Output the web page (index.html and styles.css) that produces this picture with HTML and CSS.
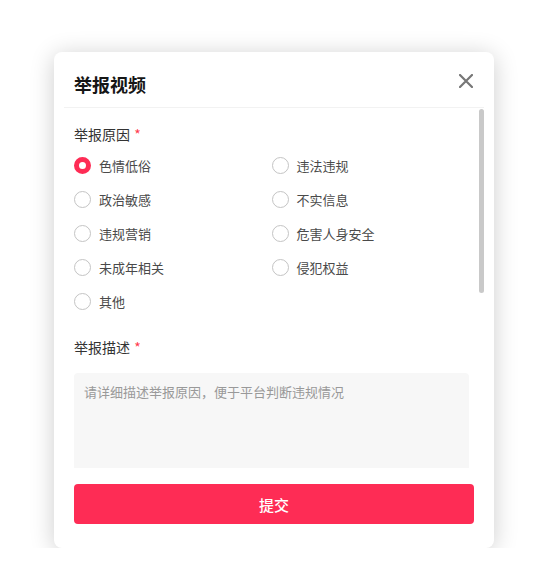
FILE: index.html
```html
<!DOCTYPE html>
<html lang="zh-CN">
<head>
<meta charset="utf-8">
<title>举报视频</title>
<link rel="stylesheet" href="styles.css">
</head>
<body>
<div class="modal">
  <div class="modal-header">
    <span class="modal-title">举报视频</span>
    <button class="close" aria-label="关闭">
      <svg width="14" height="14" viewBox="0 0 14 14"><path d="M1 1 L13 13 M13 1 L1 13" stroke="#777" stroke-width="2.2" stroke-linecap="round"/></svg>
    </button>
  </div>
  <div class="modal-body">
    <div class="content">
      <div class="field-label">举报原因 <span class="req">*</span></div>
      <div class="radio-grid">
        <label class="radio checked"><span class="dot"></span>色情低俗</label>
        <label class="radio"><span class="dot"></span>违法违规</label>
        <label class="radio"><span class="dot"></span>政治敏感</label>
        <label class="radio"><span class="dot"></span>不实信息</label>
        <label class="radio"><span class="dot"></span>违规营销</label>
        <label class="radio"><span class="dot"></span>危害人身安全</label>
        <label class="radio"><span class="dot"></span>未成年相关</label>
        <label class="radio"><span class="dot"></span>侵犯权益</label>
        <label class="radio"><span class="dot"></span>其他</label>
      </div>
      <div class="field-label desc-label">举报描述 <span class="req">*</span></div>
      <div class="textarea">请详细描述举报原因，便于平台判断违规情况</div>
    </div>
    <div class="scrollbar"><div class="thumb"></div></div>
  </div>
  <div class="modal-footer">
    <button class="submit">提交</button>
  </div>
</div>
</body>
</html>
```

FILE: styles.css
```css
* { box-sizing: border-box; }
html, body { margin: 0; padding: 0; background: #fff; }
body {
  font-family: "Noto Sans CJK SC", "Noto Sans", sans-serif;
  color: #333;
}
.modal {
  margin: 52px 0 0 54px;
  width: 440px;
  height: 496px;
  background: #fff;
  border-radius: 8px;
  box-shadow: 0 3px 24px rgba(0, 0, 0, 0.2);
  display: flex;
  flex-direction: column;
}
.modal-header {
  height: 56px;
  margin: 0 10px;
  padding: 8px 10px 0;
  border-bottom: 1px solid #f2f2f2;
  display: flex;
  align-items: center;
  justify-content: space-between;
}
.modal-title {
  font-size: 18px;
  font-weight: 700;
  color: #161616;
  line-height: 24px;
}
.close {
  border: 0;
  background: none;
  padding: 0;
  width: 14px;
  height: 14px;
  margin-right: 1px;
  margin-top: -6px;
  display: flex;
}
.modal-body {
  height: 360px;
  margin: 0 10px;
  display: flex;
  overflow: hidden;
}
.content {
  flex: 1;
  padding: 16px 10px 0 10px;
}
.scrollbar {
  width: 5px;
  flex: none;
  padding-top: 1px;
}
.thumb {
  height: 184px;
  background: #c9c9c9;
  border-radius: 3px;
}
.field-label {
  font-size: 14px;
  line-height: 20px;
  color: #333;
  margin-bottom: 4px;
}
.req { color: #ff3b4e; margin-left: 1px; }
.radio-grid {
  display: grid;
  grid-template-columns: 1fr 1fr;
  grid-auto-rows: 34px;
}
.radio {
  display: flex;
  align-items: center;
  font-size: 13px;
  color: #4a4a4a;
}
.dot {
  width: 17px;
  height: 17px;
  border-radius: 50%;
  border: 1px solid #c4c4c4;
  margin-right: 8px;
  background: #fff;
  flex: none;
}
.radio.checked .dot { border: 5px solid #fe2c55; }
.desc-label { margin-top: 19px; margin-bottom: 16px; }
.textarea {
  height: 140px;
  background: #f7f7f7;
  border-radius: 4px;
  padding: 9px 10px;
  font-size: 13px;
  line-height: 20px;
  color: #999;
}
.modal-footer { padding: 16px 20px 24px; }
.submit {
  width: 100%;
  height: 40px;
  border: 0;
  border-radius: 4px;
  background: #fe2c55;
  color: #fff;
  font-family: "Noto Sans CJK SC", sans-serif;
  font-size: 15px;
  font-weight: 500;
}
```
